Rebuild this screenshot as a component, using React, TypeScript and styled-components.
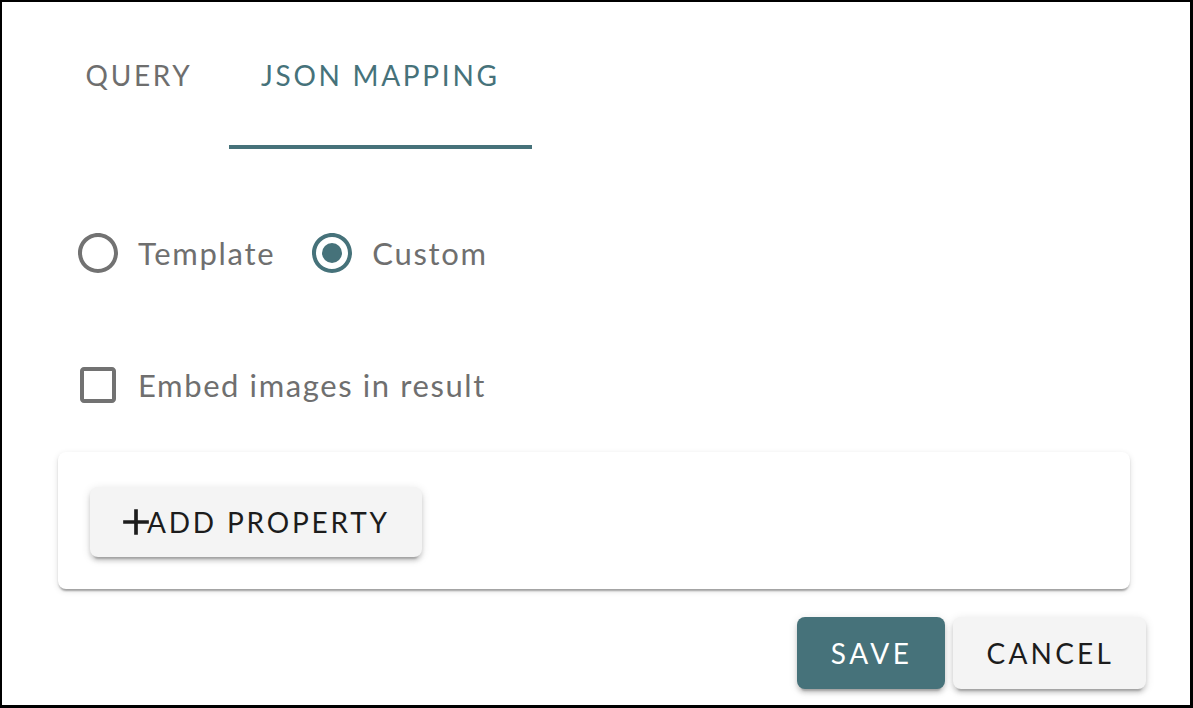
import React from "react";
import styled, { createGlobalStyle } from "styled-components";

const TEAL = "#46727a";
const FONT = `"Lato", "Noto Sans", sans-serif`;

const Global = createGlobalStyle`
  html, body { margin: 0; padding: 0; background: #fff; }
  * { box-sizing: border-box; }
  body { font-family: ${FONT}; }
`;

const Frame = styled.div`
  width: 1193px;
  height: 708px;
  border-style: solid;
  border-color: #000;
  border-width: 2px 3px 3px 2px;
  background: #fff;
  display: flex;
  flex-direction: column;
  padding: 0 44px 0 56px;
  overflow: hidden;
`;

const TabBar = styled.div`
  display: flex;
  margin: 47px 0 0 -9px;
`;

const Tab = styled.div<{ $active?: boolean }>`
  min-width: 180px;
  height: 100px;
  padding: 12px 32px 0;
  display: flex;
  justify-content: center;
  align-items: flex-start;
  font-family: ${FONT};
  font-size: 28px;
  line-height: 28px;
  letter-spacing: 2.7px;
  text-transform: uppercase;
  color: ${(p) => (p.$active ? TEAL : "#6e6e6e")};
  border-bottom: 4px solid ${(p) => (p.$active ? TEAL : "transparent")};
`;

const RadioRow = styled.div`
  display: flex;
  align-items: center;
  margin: 80px 0 0 16px;
  height: 48px;
`;

const Option = styled.label`
  display: flex;
  align-items: center;
  gap: 16px;
  margin-right: 33px;
  font-family: ${FONT};
  font-size: 31px;
  letter-spacing: 1.7px;
  color: #6f6f6f;
`;

const CheckRow = styled.div`
  display: flex;
  align-items: center;
  gap: 16px;
  margin: 84px 0 0 16px;
  height: 48px;
  font-family: ${FONT};
  font-size: 31px;
  letter-spacing: 1.6px;
  color: #6f6f6f;
`;

const Icon = styled.svg<{ $color: string }>`
  width: 48px;
  height: 48px;
  flex: none;
  fill: ${(p) => p.$color};
`;

const Card = styled.div`
  margin: 43px 16px 0 0;
  height: 137px;
  background: #fff;
  border-radius: 8px;
  padding: 35px 32px 0;
  box-shadow: 0 4px 2px -2px rgba(0, 0, 0, 0.2), 0 2px 2px 0 rgba(0, 0, 0, 0.14),
    0 2px 6px 0 rgba(0, 0, 0, 0.12);
  display: flex;
  align-items: flex-start;
`;

const Button = styled.button<{ $primary?: boolean }>`
  height: 72px;
  display: inline-flex;
  align-items: center;
  justify-content: center;
  border: none;
  border-radius: 8px;
  padding: 0 32px 0 34px;
  font-family: ${FONT};
  font-size: 28px;
  letter-spacing: 3.2px;
  text-transform: uppercase;
  background: ${(p) => (p.$primary ? TEAL : "#f4f4f4")};
  color: ${(p) => (p.$primary ? "#fff" : "#1c1c1c")};
  box-shadow: 0 6px 2px -4px rgba(0, 0, 0, 0.2), 0 4px 4px 0 rgba(0, 0, 0, 0.14),
    0 2px 10px 0 rgba(0, 0, 0, 0.12);
  cursor: pointer;
`;

const SaveButton = styled(Button)`
  letter-spacing: 3.6px;
`;

const AddButton = styled(Button)`
  padding: 0 32px 0 33px;
  height: 70px;
  letter-spacing: 2.8px;
`;

const PlusIcon = styled.svg`
  width: 44px;
  height: 44px;
  margin-right: -11px;
  margin-left: -9px;
  fill: #1c1c1c;
`;

const Footer = styled.div`
  display: flex;
  justify-content: flex-end;
  gap: 8px;
  margin-top: 28px;
`;

const RadioIcon: React.FC<{ checked?: boolean }> = ({ checked }) => (
  <Icon viewBox="0 0 24 24" $color={checked ? TEAL : "#727272"}>
    <path d="M12 2C6.48 2 2 6.48 2 12s4.48 10 10 10 10-4.48 10-10S17.52 2 12 2zm0 18c-4.42 0-8-3.58-8-8s3.58-8 8-8 8 3.58 8 8-3.58 8-8 8z" />
    {checked && <circle cx="12" cy="12" r="5" />}
  </Icon>
);

const CheckIcon: React.FC = () => (
  <Icon viewBox="0 0 24 24" $color="#727272">
    <path d="M19 5v14H5V5h14m0-2H5c-1.11 0-2 .9-2 2v14c0 1.1.89 2 2 2h14c1.1 0 2-.9 2-2V5c0-1.1-.9-2-2-2z" />
  </Icon>
);

export default function App() {
  return (
    <>
      <Global />
      <Frame>
        <TabBar>
          <Tab>Query</Tab>
          <Tab $active>JSON Mapping</Tab>
        </TabBar>
        <RadioRow>
          <Option>
            <RadioIcon />
            Template
          </Option>
          <Option>
            <RadioIcon checked />
            Custom
          </Option>
        </RadioRow>
        <CheckRow>
          <CheckIcon />
          Embed images in result
        </CheckRow>
        <Card>
          <AddButton>
            <PlusIcon viewBox="0 0 24 24">
              <path d="M19 13h-6v6h-2v-6H5v-2h6V5h2v6h6v2z" />
            </PlusIcon>
            Add property
          </AddButton>
        </Card>
        <Footer>
          <SaveButton $primary>Save</SaveButton>
          <Button>Cancel</Button>
        </Footer>
      </Frame>
    </>
  );
}
